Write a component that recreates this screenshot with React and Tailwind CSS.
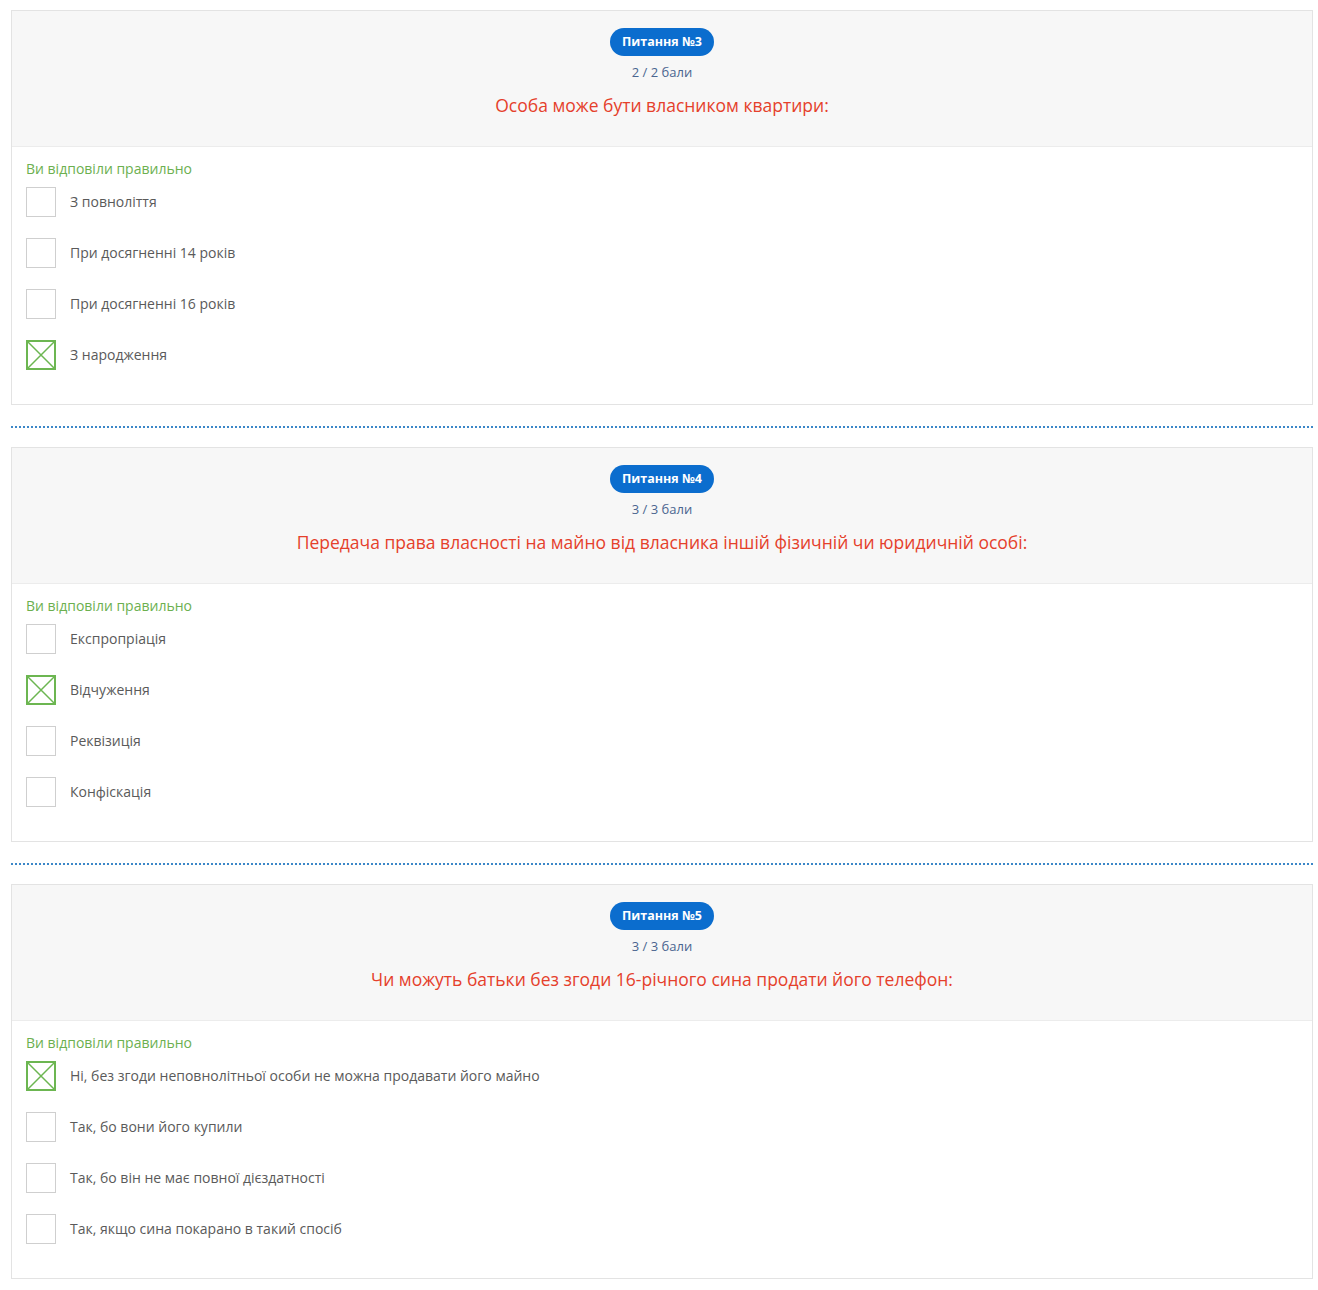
import React from 'react'

const questions = [
  {
    num: 3,
    points: '2 / 2 бали',
    text: 'Особа може бути власником квартири:',
    answers: ['З повноліття', 'При досягненні 14 років', 'При досягненні 16 років', 'З народження'],
    correct: 3,
  },
  {
    num: 4,
    points: '3 / 3 бали',
    text: 'Передача права власності на майно від власника іншій фізичній чи юридичній особі:',
    answers: ['Експропріація', 'Відчуження', 'Реквізиція', 'Конфіскація'],
    correct: 1,
  },
  {
    num: 5,
    points: '3 / 3 бали',
    text: 'Чи можуть батьки без згоди 16-річного сина продати його телефон:',
    answers: [
      'Ні, без згоди неповнолітньої особи не можна продавати його майно',
      'Так, бо вони його купили',
      'Так, бо він не має повної дієздатності',
      'Так, якщо сина покарано в такий спосіб',
    ],
    correct: 0,
  },
]

function Box({ checked }) {
  if (checked) {
    return (
      <svg width="30" height="30" viewBox="0 0 30 30" className="shrink-0">
        <rect x="1" y="1" width="28" height="28" fill="none" stroke="#6cb651" strokeWidth="2" />
        <path d="M2 2 L28 28 M28 2 L2 28" stroke="#6cb651" strokeWidth="1.5" />
      </svg>
    )
  }
  return <div className="w-[30px] h-[30px] shrink-0 border border-[#cfcfcf] bg-white" />
}

function QuestionCard({ q }) {
  return (
    <div className="border border-[#e3e3e3] bg-white h-[395px]">
      <div className="bg-[#f7f7f7] border-b border-[#ececec] h-[136px] flex flex-col items-center pt-[17px]">
        <span className="h-[28px] px-[12px] rounded-full bg-[#0b6dce] text-white text-[12.5px] font-bold flex items-center">
          Питання №{q.num}
        </span>
        <div className="mt-[8px] text-[13px] text-[#4a6590] leading-[17px]">{q.points}</div>
        <div className="mt-[13px] text-[17.5px] text-[#e5402b] leading-[22px]">{q.text}</div>
      </div>
      <div className="px-[14px] pt-[12px]">
        <div className="text-[14px] text-[#6cb04f] leading-[19px]">Ви відповіли правильно</div>
        <div className="mt-[9px] flex flex-col gap-[21px]">
          {q.answers.map((a, i) => (
            <div key={i} className="flex items-center gap-[14px]">
              <Box checked={i === q.correct} />
              <span className="text-[14px] text-[#5a5a5a] leading-[19px] -mt-[2px]">{a}</span>
            </div>
          ))}
        </div>
      </div>
    </div>
  )
}

export default function App() {
  return (
    <div className="bg-white min-h-[1290px] pl-[11px] pt-[10px] pr-[5px]" style={{ fontFamily: '"Open Sans", "Noto Sans", sans-serif' }}>
      {questions.map((q, i) => (
        <div key={q.num}>
          {i > 0 && (
            <div className="h-[42px] flex items-center">
              <div className="w-full border-t-2 border-dotted border-[#3b87c8] mt-[2px]" />
            </div>
          )}
          <QuestionCard q={q} />
        </div>
      ))}
    </div>
  )
}
